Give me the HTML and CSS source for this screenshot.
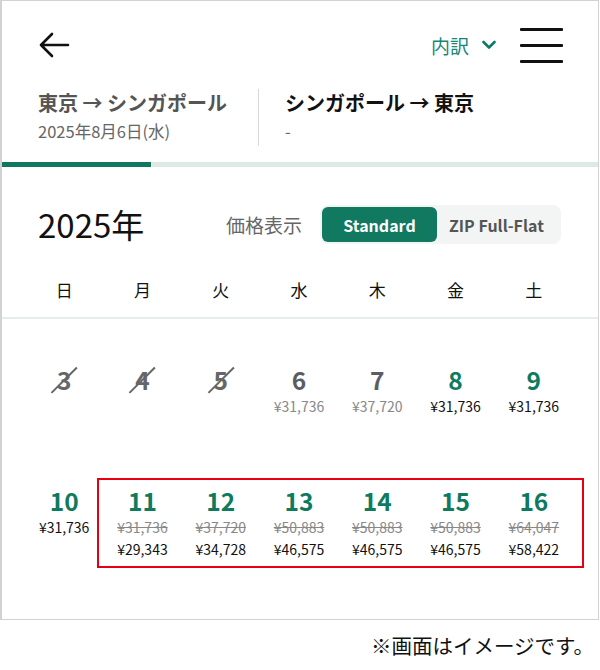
FILE: index.html
```html
<!DOCTYPE html>
<html lang="ja">
<head>
<meta charset="utf-8">
<link rel="stylesheet" href="styles.css">
</head>
<body>
<div class="frame">
  <div class="topbar">
    <svg class="back" width="32" height="28" viewBox="0 0 32 28"><path d="M30 14H3M14 3L3 14L14 25" fill="none" stroke="#111" stroke-width="2.6" stroke-linecap="round" stroke-linejoin="round"/></svg>
    <div class="right">
      <div class="breakdown">内訳
        <svg class="chev" width="14" height="10" viewBox="0 0 14 10"><path d="M1.5 2L7 7.5L12.5 2" fill="none" stroke="#0f7a64" stroke-width="2.6" stroke-linecap="round" stroke-linejoin="round"/></svg>
      </div>
      <div class="burger"><span></span><span></span><span></span></div>
    </div>
  </div>
  <div class="route">
    <div class="leg leg1">
      <div class="leg-title">東京 → シンガポール</div>
      <div class="leg-sub">2025年8月6日(水)</div>
    </div>
    <div class="leg leg2">
      <div class="leg-title active">シンガポール → 東京</div>
      <div class="leg-sub">-</div>
    </div>
  </div>
  <div class="progress"><div class="progress-fill"></div></div>
  <div class="yearrow">
    <div class="year">2025年</div>
    <div class="pricemode">
      <span class="pm-label">価格表示</span>
      <div class="toggle">
        <span class="tg tg-on">Standard</span>
        <span class="tg">ZIP Full-Flat</span>
      </div>
    </div>
  </div>
  <div class="weekdays">
    <span>日</span><span>月</span><span>火</span><span>水</span><span>木</span><span>金</span><span>土</span>
  </div>
  <div class="calendar">
    <div class="week week1">
      <div class="day past"><div class="num">3</div></div>
      <div class="day past"><div class="num">4</div></div>
      <div class="day past"><div class="num">5</div></div>
      <div class="day dim"><div class="num">6</div><div class="price">¥31,736</div></div>
      <div class="day dim"><div class="num">7</div><div class="price">¥37,720</div></div>
      <div class="day ok"><div class="num">8</div><div class="price">¥31,736</div></div>
      <div class="day ok"><div class="num">9</div><div class="price">¥31,736</div></div>
    </div>
    <div class="week week2">
      <div class="highlight"></div>
      <div class="day ok"><div class="num">10</div><div class="price">¥31,736</div></div>
      <div class="day ok"><div class="num">11</div><div class="price old">¥31,736</div><div class="price">¥29,343</div></div>
      <div class="day ok"><div class="num">12</div><div class="price old">¥37,720</div><div class="price">¥34,728</div></div>
      <div class="day ok"><div class="num">13</div><div class="price old">¥50,883</div><div class="price">¥46,575</div></div>
      <div class="day ok"><div class="num">14</div><div class="price old">¥50,883</div><div class="price">¥46,575</div></div>
      <div class="day ok"><div class="num">15</div><div class="price old">¥50,883</div><div class="price">¥46,575</div></div>
      <div class="day ok"><div class="num">16</div><div class="price old">¥64,047</div><div class="price">¥58,422</div></div>
    </div>
  </div>
</div>
<div class="note">※画面はイメージです。</div>
</body>
</html>
```
FILE: styles.css
```css
* { box-sizing: border-box; }
html, body { margin: 0; padding: 0; background: #fff; }
body {
  font-family: "Noto Sans CJK JP", "Noto Sans", sans-serif;
  color: #111;
  width: 600px;
}
.frame {
  width: 599px;
  height: 620px;
  border: 1px solid #d2d2d2;
  border-left-width: 2px;
  overflow: hidden;
}
.topbar {
  height: 88px;
  display: flex;
  align-items: center;
  justify-content: space-between;
  padding: 0 35px 0 36px;
}
.back { display: block; }
.right { display: flex; align-items: center; }
.breakdown {
  display: flex;
  align-items: center;
  font-size: 19px;
  color: #17877a;
  gap: 13px;
  margin-right: 24px;
}
.chev { display: block; }
.burger { display: flex; flex-direction: column; gap: 13px; width: 43px; }
.burger span { display: block; height: 3px; background: #111; border-radius: 1px; }
.route {
  display: flex;
  height: 57px;
}
.leg { padding-top: 0; }
.leg1 { width: 257px; padding-left: 36px; border-right: 1px solid #d8d8d8; }
.leg2 { padding-left: 26px; }
.leg-title { font-size: 20px; line-height: 28px; font-weight: 700; color: #555; }
.leg-title.active { color: #111; }
.leg-sub { font-size: 16.5px; line-height: 24px; margin-top: 2px; color: #666; }
.progress {
  margin-top: 16px;
  height: 5px;
  background: #dde9e5;
}
.progress-fill { width: 149px; height: 5px; background: #10785e; }
.yearrow {
  margin-top: 38px;
  height: 39px;
  display: flex;
  align-items: center;
  justify-content: space-between;
  padding: 0 37px 0 36px;
}
.year { font-size: 33px; line-height: 39px; font-weight: 400; color: #111; margin-top: -1px; }
.pricemode { display: flex; align-items: center; }
.pm-label { font-size: 19px; color: #666; margin-right: 18px; }
.toggle {
  display: flex;
  align-items: center;
  background: #f2f5f4;
  border-radius: 8px;
  padding: 2px;
  width: 241px;
  height: 39px;
}
.tg {
  height: 35px;
  display: flex;
  align-items: center;
  justify-content: center;
  font-size: 16px;
  font-weight: 700;
  color: #555;
  padding: 0 12px;
}
.tg-on {
  width: 115px;
  background: #10795f;
  color: #fff;
  border-radius: 6px;
}
.weekdays {
  margin-top: 29px;
  display: grid;
  grid-template-columns: repeat(7, 1fr);
  padding: 0 25px 10px 23px;
  border-bottom: 2px solid #e6eeec;
  font-size: 17px;
  line-height: 34px;
  text-align: center;
  color: #111;
}
.calendar { padding: 0 25px 0 23px; }
.week {
  display: grid;
  grid-template-columns: repeat(7, 1fr);
  position: relative;
}
.week1 { padding-top: 46px; }
.week2 { padding-top: 69px; }
.day { text-align: center; }
.num {
  font-size: 24.5px;
  line-height: 30px;
  font-weight: 700;
  display: inline-block;
  position: relative;
}
.price { font-size: 14px; line-height: 22px; color: #111; }
.price.old { color: #888; text-decoration: line-through; }
.past .num { color: #666; }
.past .num::after {
  content: "";
  position: absolute;
  left: 50%;
  top: 50%;
  width: 36px;
  height: 1.5px;
  background: #666;
  transform: translate(-50%, -50%) rotate(-45deg);
}
.dim .num { color: #5a5e63; }
.dim .price { color: #888; }
.ok .num { color: #0f7a5e; }
.highlight {
  position: absolute;
  left: 72px;
  right: -11px;
  top: 61px;
  height: 90px;
  border: 2px solid #e60012;
  pointer-events: none;
}
.note {
  text-align: right;
  padding: 11px 6px 0 0;
  font-size: 20.5px;
  line-height: 28px;
  color: #111;
}
```
